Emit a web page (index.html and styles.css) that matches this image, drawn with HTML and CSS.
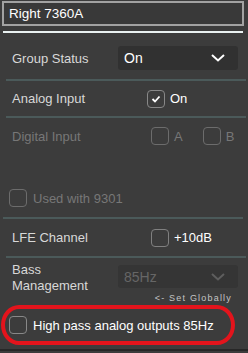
FILE: index.html
```html
<!DOCTYPE html>
<html lang="en">
<head>
  <meta charset="UTF-8" />
  <title>Speaker settings</title>
  <link rel="stylesheet" href="styles.css">
</head>
<body>
  <div class="panel">
    <div class="name-field">Right 7360A</div>
    <div class="rule rule-light"></div>

    <div class="row row-group">
      <span class="label">Group Status</span>
      <div class="select">
        <span>On</span>
        <svg class="chevron" width="14" height="8" viewBox="0 0 14 8"><path d="M1 1 L7 6.5 L13 1" fill="none" stroke="#fff" stroke-width="2"/></svg>
      </div>
    </div>
    <div class="rule"></div>

    <div class="row row-analog">
      <span class="label">Analog Input</span>
      <label class="check check-analog">
        <span class="box checked">
          <svg width="10" height="8" viewBox="0 0 10 8"><path d="M1.5 4 L4 6.5 L8.5 1.5" fill="none" stroke="#fff" stroke-width="1.8"/></svg>
        </span>
        <span class="check-text">On</span>
      </label>
    </div>
    <div class="rule"></div>

    <div class="row row-digital disabled">
      <span class="label">Digital Input</span>
      <label class="check check-a"><span class="box"></span><span class="check-text">A</span></label>
      <label class="check check-b"><span class="box"></span><span class="check-text">B</span></label>
    </div>

    <div class="row row-used disabled">
      <label class="check"><span class="box"></span><span class="check-text">Used with 9301</span></label>
    </div>
    <div class="rule rule-wide"></div>

    <div class="row row-lfe">
      <span class="label">LFE Channel</span>
      <label class="check check-lfe"><span class="box"></span><span class="check-text">+10dB</span></label>
    </div>
    <div class="rule"></div>

    <div class="row row-bass">
      <span class="label">Bass<br>Management</span>
      <div class="select select-disabled">
        <span>85Hz</span>
        <svg class="chevron" width="14" height="8" viewBox="0 0 14 8"><path d="M1 1 L7 6.5 L13 1" fill="none" stroke="#5e5e5e" stroke-width="2"/></svg>
      </div>
    </div>
    <div class="set-globally">&lt;- Set Globally</div>

    <div class="highlight">
      <label class="check"><span class="box"></span><span class="check-text">High pass analog outputs 85Hz</span></label>
    </div>

    <div class="bottom-edge"></div>
  </div>
</body>
</html>
```

FILE: styles.css
```css
* {
  box-sizing: border-box;
}

body {
  margin: 0;
  background: #3c3c3c;
  font-family: 'Liberation Sans', Arial, sans-serif;
  color: #d8d8d8;
}

.panel {
  width: 248px;
  height: 353px;
  padding-top: 1px;
  overflow: hidden;
}

.name-field {
  margin-left: 2px;
  width: 242px;
  height: 25px;
  border: 2px solid #a2a2a2;
  background: #393939;
  padding-left: 5px;
  font-size: 13.5px;
  line-height: 21px;
  color: #fff;
}

.rule {
  height: 2px;
  margin-left: 6px;
  width: 240px;
  background: #4b5a5a;
}

.rule-light {
  margin-top: 5px;
  margin-left: 3px;
  background: #e9f1f1;
}

.rule-wide {
  margin-left: 3px;
}

.row {
  display: flex;
  align-items: center;
  padding-left: 12px;
  font-size: 13px;
}

.label {
  width: 106px;
  flex-shrink: 0;
}

.row-group {
  height: 46px;
  padding-top: 4px;
}

.select {
  width: 120px;
  height: 24px;
  border-radius: 3px;
  background: #313131;
  display: flex;
  align-items: center;
  justify-content: space-between;
  padding: 0 13px 0 6px;
  font-size: 14px;
  color: #fff;
}

.select-disabled {
  height: 23px;
  margin-top: 3px;
  background: #353535;
  color: #666;
}

.row-analog {
  height: 35px;
}

.check {
  display: flex;
  align-items: center;
}

.box {
  width: 18px;
  height: 18px;
  border: 1.5px solid #888;
  border-radius: 4px;
  display: flex;
  align-items: center;
  justify-content: center;
  flex-shrink: 0;
}

.check-text {
  margin-left: 5px;
}

.check-analog {
  margin-left: 29px;
  color: #fff;
}

.disabled {
  color: #777;
}

.disabled .box {
  border-color: #6c6c6c;
}

.row-digital {
  height: 36px;
}

.check-a {
  margin-left: 33px;
}

.check-b {
  margin-left: 20px;
}

.row-used {
  height: 34px;
  margin-top: 27px;
  margin-bottom: 2px;
  padding-left: 9px;
  font-size: 13px;
}

.row-used .check-text {
  margin-left: 6px;
}

.row-lfe {
  height: 37px;
}

.check-lfe {
  margin-left: 33px;
  color: #fff;
}

.check-lfe .box {
  border-color: #808080;
}

.row-bass {
  align-items: flex-start;
  padding-top: 4px;
  height: 35px;
  line-height: 16px;
}

.set-globally {
  width: 248px;
  padding-right: 16px;
  text-align: right;
  font-size: 9px;
  letter-spacing: 1.2px;
  line-height: 10px;
  height: 12px;
  color: #c4c4c4;
}

.highlight {
  margin-left: 1px;
  width: 234px;
  height: 40px;
  border: 4px solid #e3141c;
  border-radius: 18px / 20px;
  display: flex;
  align-items: center;
  padding-left: 4px;
  font-size: 13px;
  color: #fff;
}

.highlight .check-text {
  margin-left: 6px;
}

.bottom-edge {
  margin-top: 4px;
  height: 2px;
  background: #272727;
}
```
